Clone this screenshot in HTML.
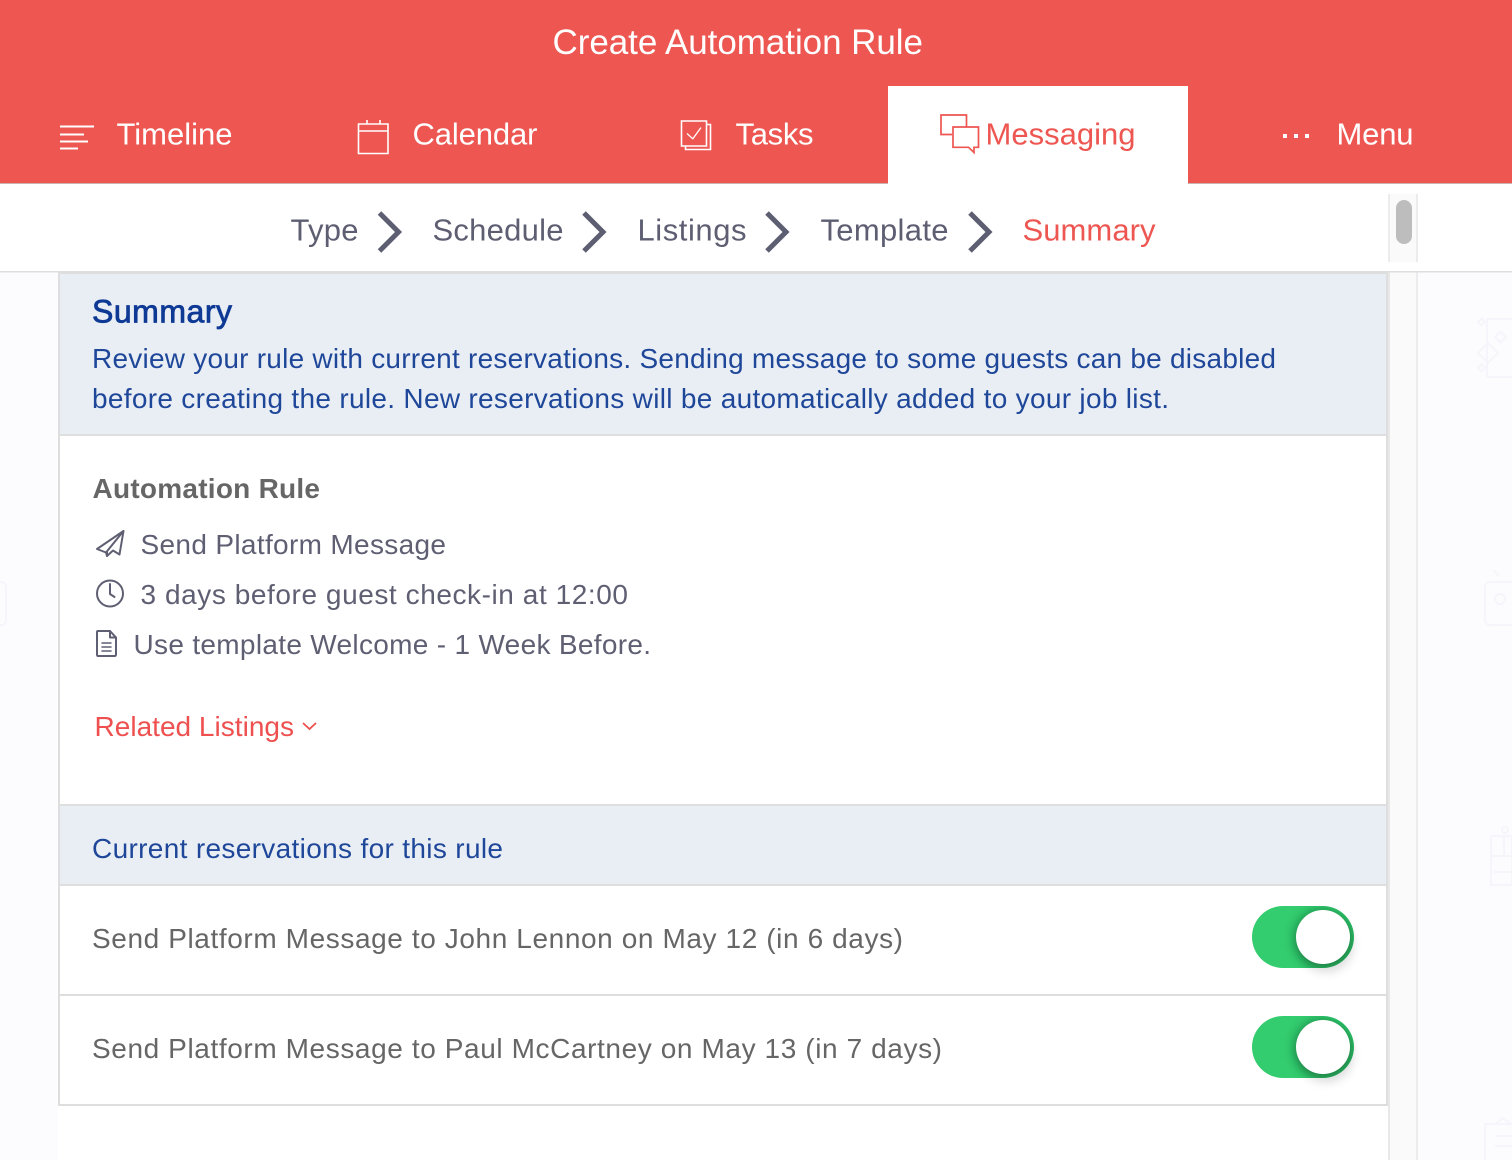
<!DOCTYPE html>
<html><head><meta charset="utf-8"><title>Create Automation Rule</title>
<style>html,body{margin:0;padding:0;background:#fff}svg{display:block}text{font-family:"Liberation Sans",sans-serif;white-space:pre}</style></head>
<body>
<svg xmlns="http://www.w3.org/2000/svg" width="1512" height="1160" viewBox="0 0 1512 1160">
<defs>
<filter id="sh" x="-30%" y="-30%" width="170%" height="180%"><feGaussianBlur stdDeviation="5"/></filter>
<clipPath id="tc1"><rect x="1252" y="906" width="102" height="62" rx="31"/></clipPath>
<clipPath id="tc2"><rect x="1252" y="1016" width="102" height="62" rx="31"/></clipPath>
</defs>
<rect width="1512" height="1160" fill="#fcfcfe"/>
<g fill="none" stroke="#f5f5fb" stroke-width="2">
<path d="M1512 319H1487V377H1512M1478 353l10-10 10 10-10 10zM1495 337l5.500-5.500 5.500 5.500-5.500 5.500zM1478 322l3.500-3.500 3.500 3.500-3.500 3.500zM1478 368l3.500-3.500 3.500 3.500-3.500 3.500z"/>
<rect x="1485" y="582" width="40" height="43" rx="5"/><circle cx="1500" cy="599" r="5"/><path d="M1493 570l6 6"/>
<path d="M1491 836H1512V885H1491zM1491 856H1512M1504 836V856"/><circle cx="1505" cy="830" r="3"/><path d="M1494 872H1512"/>
<rect x="1485" y="1124" width="40" height="50"/><path d="M1495 1124l8-6 8 6M1495 1136h17M1495 1146h17"/>
<rect x="-34" y="582" width="40" height="43" rx="5"/>
</g>
<rect x="58" y="272" width="1332" height="888" fill="#fff"/>
<rect x="1390" y="272" width="28" height="888" fill="#fafafa"/>
<rect x="1388" y="272" width="2" height="888" fill="#e8e8e8"/>
<rect x="1416" y="272" width="2" height="888" fill="#ececec"/>

<rect width="1512" height="183" fill="#ed5651"/>
<rect y="183" width="1512" height="1" fill="#c9b5ae"/>
<rect y="184" width="1512" height="87" fill="#fff"/>
<rect y="271" width="1512" height="1.5" fill="#dedede"/>
<rect x="888" y="86" width="300" height="98" fill="#fff"/>

<text x="552.500" y="54" font-size="35" fill="#fff" textLength="370.500" lengthAdjust="spacing">Create Automation Rule</text>
<g font-size="31" fill="#fff">
<text x="116.500" y="144.500" textLength="116" lengthAdjust="spacing">Timeline</text>
<text x="412.500" y="144.500" textLength="125" lengthAdjust="spacing">Calendar</text>
<text x="735.500" y="144.500" textLength="78" lengthAdjust="spacing">Tasks</text>
<text x="1336.500" y="144.500" textLength="77" lengthAdjust="spacing">Menu</text>
</g>
<text x="985.500" y="144.500" font-size="31" fill="#ed5651" textLength="150" lengthAdjust="spacing">Messaging</text>

<g fill="none" stroke="#fff" stroke-width="2">
<path d="M60 126.500H94M60 134.500H84M60 141.500H88M60 148.500H78" stroke-width="2"/>
<path d="M358.500 124H388V153.500H358.500zM358.500 131H388M367 120V124M380 120V124" stroke-width="1.600"/>
<path d="M681.500 121H706.500V146H681.500z" stroke-width="1.600"/>
<path d="M706.500 124.500H710.500V149.500H685.500V146" stroke-width="1.600"/>
<path d="M687 133.500L692.800 138.800L701 127.500" stroke-width="1.300"/>
</g>
<g fill="#fff"><rect x="1283" y="134" width="4" height="4"/><rect x="1294" y="134" width="4" height="4"/><rect x="1305" y="134" width="4" height="4"/></g>
<g fill="none" stroke="#ed5651" stroke-width="1.700">
<path d="M952 134.500H941V115H966.500V127"/>
<path d="M953 127H978.500V147.300H974V152.500L968.500 147.300H953z" fill="#fff"/>
</g>

<g font-size="31" fill="#5e5e73">
<text x="290.500" y="240.500" textLength="68" lengthAdjust="spacing">Type</text>
<text x="432.500" y="240.500" textLength="131" lengthAdjust="spacing">Schedule</text>
<text x="637.500" y="240.500" textLength="109" lengthAdjust="spacing">Listings</text>
<text x="820.500" y="240.500" textLength="128" lengthAdjust="spacing">Template</text>
</g>
<text x="1022.500" y="240.500" font-size="31" fill="#ed5651" textLength="133" lengthAdjust="spacing">Summary</text>
<g fill="none" stroke="#5e5e73" stroke-width="5">
<path d="M379.500 213L398.500 232L379.500 251"/>
<path d="M584 213L603 232L584 251"/>
<path d="M767 213L786 232L767 251"/>
<path d="M970 213L989 232L970 251"/>
</g>

<rect x="1389" y="194" width="29" height="68" fill="#fafafa"/>
<rect x="1388" y="194" width="2" height="68" fill="#ececec"/>
<rect x="1416" y="194" width="2" height="68" fill="#ececec"/>
<rect x="1396" y="200" width="16" height="44" rx="8" fill="#bdbdbd"/>

<rect x="59" y="273" width="1328" height="832" fill="#fff" stroke="#dedede" stroke-width="2"/>
<rect x="60" y="274" width="1326" height="160" fill="#e9eef5"/>
<rect x="60" y="434" width="1326" height="2" fill="#dedede"/>
<rect x="60" y="804" width="1326" height="2" fill="#dedede"/>
<rect x="60" y="806" width="1326" height="78" fill="#e9eef5"/>
<rect x="60" y="884" width="1326" height="2" fill="#dedede"/>
<rect x="60" y="994" width="1326" height="2" fill="#dedede"/>

<text x="92" y="322.500" font-size="32" fill="#0e3a96" stroke="#0e3a96" stroke-width=".8" textLength="140" lengthAdjust="spacing">Summary</text>
<g font-size="28" fill="#1f4799">
<text x="92" y="368" textLength="1184" lengthAdjust="spacing">Review your rule with current reservations. Sending message to some guests can be disabled</text>
<text x="92" y="408" textLength="1077" lengthAdjust="spacing">before creating the rule. New reservations will be automatically added to your job list.</text>
<text x="92" y="858" textLength="411" lengthAdjust="spacing">Current reservations for this rule</text>
</g>
<text x="92.500" y="498" font-size="28" font-weight="bold" fill="#666" textLength="227.500" lengthAdjust="spacing">Automation Rule</text>
<g font-size="28" fill="#5f5f73">
<text x="140.500" y="554" textLength="305.500" lengthAdjust="spacing">Send Platform Message</text>
<text x="140.500" y="604" textLength="487.500" lengthAdjust="spacing">3 days before guest check-in at 12:00</text>
<text x="133.500" y="654" textLength="517.500" lengthAdjust="spacing">Use template Welcome - 1 Week Before.</text>
</g>
<text x="94.500" y="736" font-size="28" fill="#ee5050" textLength="199.500" lengthAdjust="spacing">Related Listings</text>
<g font-size="28" fill="#666">
<text x="92" y="948" textLength="811" lengthAdjust="spacing">Send Platform Message to John Lennon on May 12 (in 6 days)</text>
<text x="92" y="1058" textLength="850" lengthAdjust="spacing">Send Platform Message to Paul McCartney on May 13 (in 7 days)</text>
</g>

<g fill="none" stroke="#5f5f73" stroke-width="2" stroke-linejoin="round" stroke-linecap="round">
<path d="M123.500 531L97 549L106 552.500L107 556L113 550.500L119.500 554.500z"/>
<path d="M123.500 531L106 552.500M107 556V552"/>
<circle cx="110" cy="593.500" r="13"/>
<path d="M110 584V594L114.500 597"/>
<path d="M98 631H110L116 637.500V654.500Q116 656 114.500 656H98Q97 656 97 654.500V632Q97 631 98 631z"/>
<path d="M110 631V637.500H116"/>
<path d="M102 643H111M102 647H111M102 651H111" stroke-width="1.500"/>
</g>
<path d="M303 723L309.500 729L316 723" fill="none" stroke="#ee5050" stroke-width="1.800"/>

<g>
<rect x="1252" y="906" width="102" height="62" rx="31" fill="#33cc6e"/>
<g clip-path="url(#tc1)"><circle cx="1323" cy="938" r="29" fill="#0f5a33" opacity=".55" filter="url(#sh)"/></g>
<circle cx="1326" cy="945" r="27" fill="#000" opacity=".14" filter="url(#sh)"/>
<circle cx="1323" cy="937" r="27" fill="#fff"/>
<rect x="1252" y="1016" width="102" height="62" rx="31" fill="#33cc6e"/>
<g clip-path="url(#tc2)"><circle cx="1323" cy="1048" r="29" fill="#0f5a33" opacity=".55" filter="url(#sh)"/></g>
<circle cx="1326" cy="1055" r="27" fill="#000" opacity=".14" filter="url(#sh)"/>
<circle cx="1323" cy="1047" r="27" fill="#fff"/>
</g>
</svg>
</body></html>
